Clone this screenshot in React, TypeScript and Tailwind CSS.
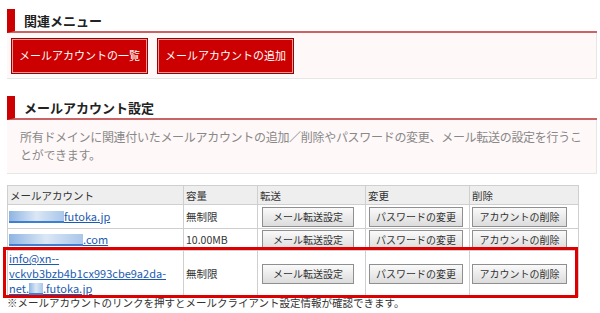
import React from 'react'

const font = { fontFamily: '"Noto Sans CJK JP", "Noto Sans", sans-serif' }

function SectionTitle({ children }: { children: React.ReactNode }) {
  return (
    <div className="flex h-[24px] items-center border-b-2 border-[#c86464] border-l-[8px] border-l-[#cc0000] pl-[9px]">
      <span className="text-[13px] font-bold leading-none text-[#222]">{children}</span>
    </div>
  )
}

function RedButton({ children }: { children: React.ReactNode }) {
  return (
    <button className="h-[36px] w-[137px] whitespace-nowrap border border-[#990000] bg-[#cc0000] text-[11px] text-white shadow-[inset_0_0_0_1px_#e89a9a]">
      {children}
    </button>
  )
}

function GrayButton({ children, w }: { children: React.ReactNode; w: string }) {
  return (
    <button
      className={`h-[20px] ${w} whitespace-nowrap border border-[#8f8f8f] bg-gradient-to-b from-[#fafafa] to-[#dcdcdc] text-[10px] leading-none text-[#333]`}
    >
      {children}
    </button>
  )
}

function Blur({ w }: { w: string }) {
  return (
    <span
      className={`inline-block h-[12px] ${w} bg-gradient-to-r from-[#8fb4e2] via-[#dbe7f5] to-[#a9c6ea] align-[-2px] border-b-2 border-[#3f7fcf]`}
    />
  )
}

const cell = 'border border-[#cfcfcf] px-[2px] text-left align-middle whitespace-nowrap'

function Actions() {
  return (
    <>
      <td className={`${cell} pl-[4px]`}>
        <GrayButton w="w-[92px]">メール転送設定</GrayButton>
      </td>
      <td className={`${cell} pl-[3px]`}>
        <GrayButton w="w-[94px]">パスワードの変更</GrayButton>
      </td>
      <td className={`${cell} pl-[2px]`}>
        <GrayButton w="w-[95px]">アカウントの削除</GrayButton>
      </td>
    </>
  )
}

export default function App() {
  return (
    <div className="w-[600px] bg-white pt-[9px] text-[#333]" style={font}>
      <div className="ml-[7px] w-[590px]">
        <SectionTitle>関連メニュー</SectionTitle>
        <div className="flex h-[46px] items-center gap-[9px] border-b border-r border-[#e6e6e6] bg-[#fff8f8] pl-[4px]">
          <RedButton>メールアカウントの一覧</RedButton>
          <RedButton>メールアカウントの追加</RedButton>
        </div>

        <div className="mt-[17px]">
          <SectionTitle>メールアカウント設定</SectionTitle>
        </div>
        <div className="h-[54px] border-b border-r border-[#e6e6e6] bg-[#fff8f8] pl-[13px] pr-[4px] pt-[8px] text-[12px] leading-[18px] tracking-[-0.3px] text-[#888]">
          所有ドメインに関連付いたメールアカウントの追加／削除やパスワードの変更、メール転送の設定を行うことができます。
        </div>

        <div className="relative mt-[11px]">
          <table className="w-[571px] table-fixed border-collapse text-[10.5px] leading-[15px]">
            <colgroup>
              <col className="w-[176px]" />
              <col className="w-[74px]" />
              <col className="w-[108px]" />
              <col className="w-[104px]" />
              <col className="w-[109px]" />
            </colgroup>
            <thead>
              <tr className="h-[19px] bg-[#eeeeee]">
                <th className={`${cell} font-normal`}>メールアカウント</th>
                <th className={`${cell} font-normal`}>容量</th>
                <th className={`${cell} font-normal`}>転送</th>
                <th className={`${cell} font-normal`}>変更</th>
                <th className={`${cell} font-normal`}>削除</th>
              </tr>
            </thead>
            <tbody>
              <tr className="h-[24px]">
                <td className={`${cell} pl-[1px]`}>
                  <a className="text-[11px] text-[#1a5ab0] underline">
                    <Blur w="w-[55px]" />
                    futoka.jp
                  </a>
                </td>
                <td className={cell}>無制限</td>
                <Actions />
              </tr>
              <tr className="h-[22px]">
                <td className={`${cell} pl-[1px]`}>
                  <a className="text-[11px] text-[#1a5ab0] underline">
                    <Blur w="w-[74px]" />
                    .com
                  </a>
                </td>
                <td className={cell}>10.00MB</td>
                <Actions />
              </tr>
              <tr className="h-[45px]">
                <td className={`${cell} pl-[1px] py-0`}>
                  <a className="block text-[11px] leading-[15px] text-[#1a5ab0] underline">
                    info@xn--
                    <br />
                    vckvb3bzb4b1cx993cbe9a2da-
                    <br />
                    net.<Blur w="w-[14px]" />.futoka.jp
                  </a>
                </td>
                <td className={cell}>無制限</td>
                <Actions />
              </tr>
            </tbody>
          </table>
          <p className="mt-[-1px] text-[10.5px] leading-[13px] text-[#333]">
            ※メールアカウントのリンクを押すとメールクライアント設定情報が確認できます。
          </p>
          <div className="absolute left-[-4px] top-[62px] h-[51px] w-[575px] border-[3px] border-[#dd0000]" />
        </div>
      </div>
    </div>
  )
}
